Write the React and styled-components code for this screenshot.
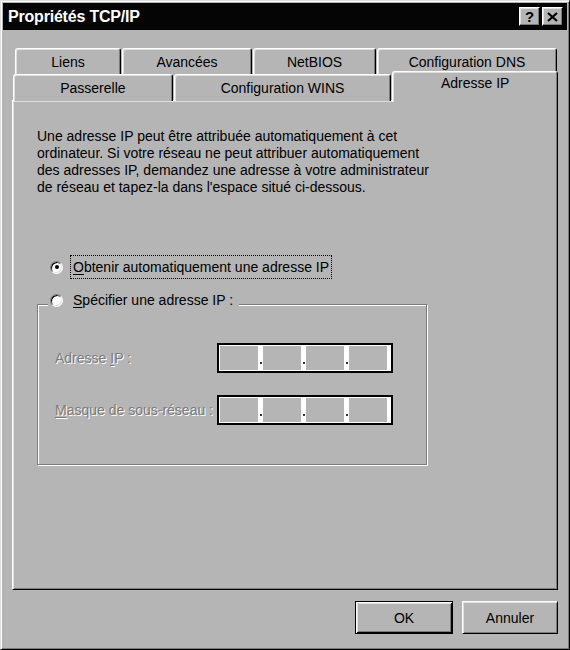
import React from 'react'
import styled, { createGlobalStyle } from 'styled-components'

const face = '#b5b5b5'
const shadow = '#7b7b7b'
const light = '#dfdfdf'
const font = `"Liberation Sans", Arial, sans-serif`

const GlobalStyle = createGlobalStyle`
  html, body {
    margin: 0;
    padding: 0;
    background: ${face};
  }
  * { box-sizing: border-box; }
`

const Window = styled.div`
  width: 570px;
  height: 650px;
  padding: 2px;
  background: ${face};
  border: 1px solid;
  border-color: ${light} #000 #000 ${light};
  box-shadow: inset 1px 1px 0 #fff, inset -1px -1px 0 ${shadow};
  font-family: ${font};
  font-size: 14px;
  color: #000;
  display: flex;
  flex-direction: column;
`

const TitleBar = styled.div`
  height: 27px;
  background: #050505;
  display: flex;
  align-items: center;
  justify-content: space-between;
  padding: 0 4px 0 5px;
`

const Title = styled.span`
  color: #fff;
  font-weight: bold;
  font-size: 16px;
  letter-spacing: -0.2px;
`

const TitleButtons = styled.div`
  display: flex;
  gap: 2px;
`

const TitleButton = styled.div`
  width: 21px;
  height: 19px;
  background: ${face};
  border: 1px solid;
  border-color: #fff #000 #000 #fff;
  box-shadow: inset -1px -1px 0 ${shadow}, inset 1px 1px 0 ${light};
  display: flex;
  align-items: center;
  justify-content: center;
  font-weight: bold;
  font-size: 15px;
  line-height: 1;
`

const Content = styled.div`
  padding: 18px 9px 0 9px;
  display: flex;
  flex-direction: column;
`

const TabRow = styled.div`
  display: flex;
  height: 26px;
  margin-left: ${p => p.$indent}px;
  gap: ${p => p.$gap}px;
  position: relative;
  z-index: ${p => p.$front ? 2 : 1};
`

const Tab = styled.div`
  width: ${p => p.$w}px;
  height: ${p => p.$selected ? 31 : 27}px;
  margin-top: ${p => p.$selected ? -3 : 0}px;
  background: ${face};
  border-top: 1px solid #fff;
  border-left: 1px solid #fff;
  border-right: 1px solid #000;
  border-radius: 3px 3px 0 0;
  box-shadow: inset 1px 1px 0 ${light}, inset -1px 0 0 ${shadow};
  display: flex;
  align-items: ${p => p.$selected ? 'flex-start' : 'center'};
  padding-top: ${p => p.$selected ? 3 : 0}px;
  justify-content: center;
  white-space: nowrap;
  position: relative;
  z-index: ${p => p.$selected ? 3 : 1};
`

const Panel = styled.div`
  height: 490px;
  background: ${face};
  border: 1px solid;
  border-color: #fff #000 #000 #fff;
  box-shadow: inset 1px 1px 0 ${light}, inset -1px -1px 0 ${shadow};
  padding: 27px 0 0 24px;
  position: relative;
  z-index: 1;
`

const Para = styled.p`
  margin: 0;
  line-height: 17px;
  white-space: nowrap;
`

const RadioRow = styled.div`
  display: flex;
  align-items: center;
  margin-top: 59px;
  padding-left: 13px;
`

const Radio = styled.span`
  width: 13px;
  height: 13px;
  flex: none;
  border-radius: 50%;
  background: #fff;
  border: 1px solid;
  border-color: ${shadow} #fff #fff ${shadow};
  box-shadow: inset 1px 1px 0 #000, inset -1px -1px 0 ${light};
  display: flex;
  align-items: center;
  justify-content: center;
  &::after {
    content: '';
    display: ${p => p.$checked ? 'block' : 'none'};
    width: 4px;
    height: 4px;
    border-radius: 50%;
    background: #000;
  }
`

const RadioLabel = styled.span`
  margin-left: 7px;
  padding: 1px 2px;
  line-height: 20px;
  border: 1px dotted ${p => p.$focus ? '#000' : 'transparent'};
  white-space: nowrap;
`

const Key = styled.span`
  text-decoration: underline;
  text-underline-offset: 2px;
`

const GroupBox = styled.div`
  width: 390px;
  margin-top: 25px;
  border: 1px solid ${shadow};
  box-shadow: inset 1px 1px 0 #fff, 1px 1px 0 #fff;
  padding: 0 0 39px 17px;
`

const Legend = styled.div`
  display: flex;
  width: fit-content;
  align-items: center;
  margin: -17px 0 0 -7px;
  padding: 0 3px 0 2px;
  background: ${face};
  height: 24px;
`

const FieldGrid = styled.div`
  display: grid;
  grid-template-columns: 162px 176px;
  row-gap: 22px;
  align-items: center;
  margin-top: 31px;
`

const DisabledLabel = styled.span`
  color: ${shadow};
  text-shadow: 1px 1px 0 #fff;
  white-space: nowrap;
`

const IpField = styled.div`
  height: 30px;
  border: 2px solid #000;
  background: #fff;
  padding: 1px 0 1px 1px;
  display: flex;
`

const Segment = styled.div`
  width: 38px;
  background: ${face};
`

const Sep = styled.div`
  width: ${p => p.$last ? 4 : 5}px;
  display: flex;
  align-items: flex-end;
  justify-content: center;
  padding-bottom: 6px;
  &::after {
    content: '';
    display: ${p => p.$last ? 'none' : 'block'};
    width: 2px;
    height: 2px;
    background: #333;
  }
`

const ButtonRow = styled.div`
  display: flex;
  justify-content: flex-end;
  gap: 9px;
  margin-top: 11px;
`

const Button = styled.div`
  width: ${p => p.$w}px;
  height: 33px;
  background: ${face};
  border: 1px solid;
  border-color: ${p => p.$default ? '#000' : '#fff #000 #000 #fff'};
  box-shadow: ${p => p.$default
    ? `inset 1px 1px 0 #fff, inset -1px -1px 0 #000, inset 2px 2px 0 ${light}, inset -2px -2px 0 ${shadow}`
    : `inset 1px 1px 0 ${light}, inset -1px -1px 0 ${shadow}`};
  display: flex;
  align-items: center;
  justify-content: center;
`

const IpInput = () => (
  <IpField>
    <Segment /><Sep />
    <Segment /><Sep />
    <Segment /><Sep />
    <Segment /><Sep $last />
  </IpField>
)

const CloseIcon = () => (
  <svg width="11" height="10" viewBox="0 0 11 10">
    <path d="M1 1 L10 9 M10 1 L1 9" stroke="#000" strokeWidth="2.2" />
  </svg>
)

export default function App() {
  return (
    <>
      <GlobalStyle />
      <Window>
        <TitleBar>
          <Title>Propriétés TCP/IP</Title>
          <TitleButtons>
            <TitleButton>?</TitleButton>
            <TitleButton><CloseIcon /></TitleButton>
          </TitleButtons>
        </TitleBar>
        <Content>
          <TabRow $indent={3} $gap={1}>
            <Tab $w={106}>Liens</Tab>
            <Tab $w={130}>Avancées</Tab>
            <Tab $w={123}>NetBIOS</Tab>
            <Tab $w={180}>Configuration DNS</Tab>
          </TabRow>
          <TabRow $indent={1} $gap={1} $front>
            <Tab $w={160}>Passerelle</Tab>
            <Tab $w={218}>Configuration WINS</Tab>
            <Tab $w={166} $selected>Adresse IP</Tab>
          </TabRow>
          <Panel>
            <Para>
              Une adresse IP peut être attribuée automatiquement à cet<br />
              ordinateur. Si votre réseau ne peut attribuer automatiquement<br />
              des adresses IP, demandez une adresse à votre administrateur<br />
              de réseau et tapez-la dans l'espace situé ci-dessous.
            </Para>
            <RadioRow>
              <Radio $checked />
              <RadioLabel $focus><Key>O</Key>btenir automatiquement une adresse IP</RadioLabel>
            </RadioRow>
            <GroupBox>
              <Legend>
                <Radio />
                <RadioLabel><Key>S</Key>pécifier une adresse IP :</RadioLabel>
              </Legend>
              <FieldGrid>
                <DisabledLabel>Adresse <Key>I</Key>P :</DisabledLabel>
                <IpInput />
                <DisabledLabel><Key>M</Key>asque de sous-réseau :</DisabledLabel>
                <IpInput />
              </FieldGrid>
            </GroupBox>
          </Panel>
          <ButtonRow>
            <Button $w={98} $default>OK</Button>
            <Button $w={96}>Annuler</Button>
          </ButtonRow>
        </Content>
      </Window>
    </>
  )
}
